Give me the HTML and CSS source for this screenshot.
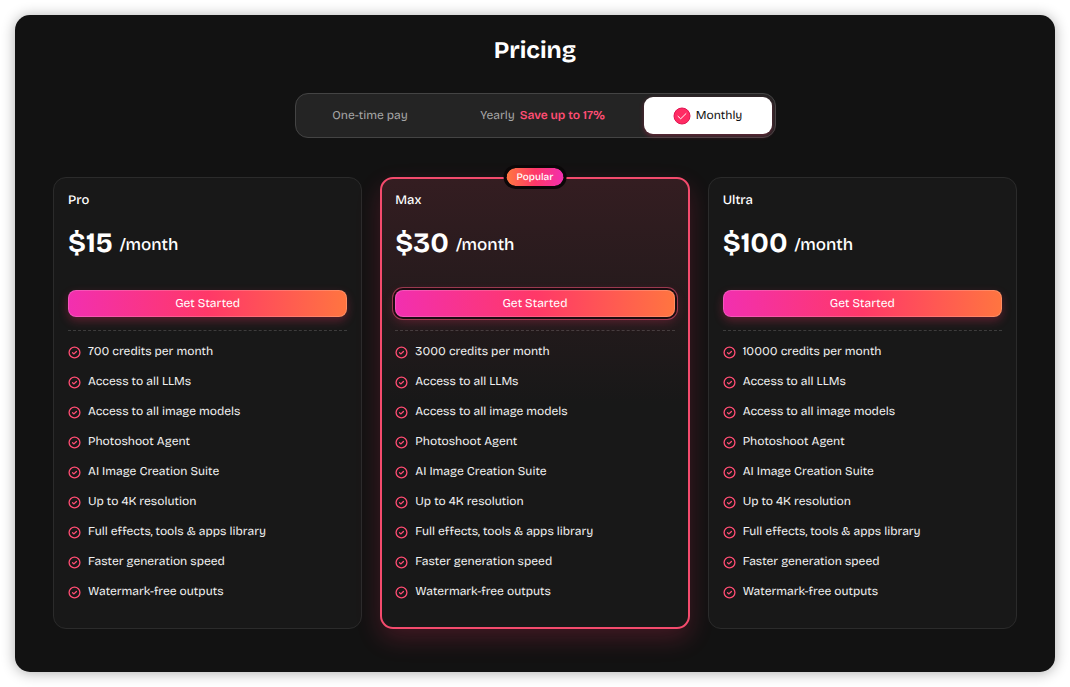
FILE: index.html
```html
<!DOCTYPE html>
<html lang="en">
<head>
    <meta charset="UTF-8">
    <meta name="viewport" content="width=device-width, initial-scale=1.0">
    <title>Pricing</title>
    <link rel="stylesheet" href="styles.css">
</head>
<body>
<svg class="sprite" aria-hidden="true">
    <symbol id="check" viewBox="0 0 12 12">
        <circle cx="6" cy="6" r="5" />
        <path d="M4.2 6.2l1.3 1.1L7.8 5" />
    </symbol>
</svg>

<main class="pricing">
    <h1 class="pricing__title">Pricing</h1>

    <div class="billing" role="group" aria-label="Billing period">
        <button class="billing__option" type="button" aria-pressed="false">One-time pay</button>
        <button class="billing__option" type="button" aria-pressed="false">Yearly <span class="billing__save">Save up to 17%</span></button>
        <button class="billing__option billing__option--active" type="button" aria-pressed="true">
            <svg class="billing__check" viewBox="0 0 18 18" aria-hidden="true">
                <circle cx="9" cy="9" r="8" />
                <path d="M5 9.3l2.7 2.5L13 6.6" />
            </svg>
            Monthly
        </button>
    </div>

    <div class="plans">
        <section class="plan">
            <h2 class="plan__name">Pro</h2>
            <p class="plan__price">$15 <span class="plan__period">/month</span></p>
            <button class="plan__button" type="button">Get Started</button>
            <ul class="plan__features">
                <li><svg><use href="#check" /></svg>700 credits per month</li>
                <li><svg><use href="#check" /></svg>Access to all LLMs</li>
                <li><svg><use href="#check" /></svg>Access to all image models</li>
                <li><svg><use href="#check" /></svg>Photoshoot Agent</li>
                <li><svg><use href="#check" /></svg>AI Image Creation Suite</li>
                <li><svg><use href="#check" /></svg>Up to 4K resolution</li>
                <li><svg><use href="#check" /></svg>Full effects, tools &amp; apps library</li>
                <li><svg><use href="#check" /></svg>Faster generation speed</li>
                <li><svg><use href="#check" /></svg>Watermark-free outputs</li>
            </ul>
        </section>

        <section class="plan plan--popular">
            <span class="plan__badge">Popular</span>
            <h2 class="plan__name">Max</h2>
            <p class="plan__price">$30 <span class="plan__period">/month</span></p>
            <button class="plan__button" type="button">Get Started</button>
            <ul class="plan__features">
                <li><svg><use href="#check" /></svg>3000 credits per month</li>
                <li><svg><use href="#check" /></svg>Access to all LLMs</li>
                <li><svg><use href="#check" /></svg>Access to all image models</li>
                <li><svg><use href="#check" /></svg>Photoshoot Agent</li>
                <li><svg><use href="#check" /></svg>AI Image Creation Suite</li>
                <li><svg><use href="#check" /></svg>Up to 4K resolution</li>
                <li><svg><use href="#check" /></svg>Full effects, tools &amp; apps library</li>
                <li><svg><use href="#check" /></svg>Faster generation speed</li>
                <li><svg><use href="#check" /></svg>Watermark-free outputs</li>
            </ul>
        </section>

        <section class="plan">
            <h2 class="plan__name">Ultra</h2>
            <p class="plan__price">$100 <span class="plan__period">/month</span></p>
            <button class="plan__button" type="button">Get Started</button>
            <ul class="plan__features">
                <li><svg><use href="#check" /></svg>10000 credits per month</li>
                <li><svg><use href="#check" /></svg>Access to all LLMs</li>
                <li><svg><use href="#check" /></svg>Access to all image models</li>
                <li><svg><use href="#check" /></svg>Photoshoot Agent</li>
                <li><svg><use href="#check" /></svg>AI Image Creation Suite</li>
                <li><svg><use href="#check" /></svg>Up to 4K resolution</li>
                <li><svg><use href="#check" /></svg>Full effects, tools &amp; apps library</li>
                <li><svg><use href="#check" /></svg>Faster generation speed</li>
                <li><svg><use href="#check" /></svg>Watermark-free outputs</li>
            </ul>
        </section>
    </div>
</main>
</body>
</html>
```
FILE: styles.css
```css
* {
  box-sizing: border-box;
}

body {
  margin: 0;
  padding: 15px;
  background: #ffffff;
  color: #ffffff;
  font-family: "Bricolage Grotesque", Inter, sans-serif;
  font-size: 12px;
  line-height: 16px;
  text-rendering: geometricPrecision;
}

button {
  font: inherit;
  text-rendering: inherit;
  cursor: pointer;
}

.sprite {
  display: none;
}

.pricing {
  padding: 20px 38px 43px;
  border-radius: 15px;
  background: #121212;
  box-shadow: 0 1px 14px rgba(0, 0, 0, 0.32);
}

.pricing__title {
  margin: 0;
  font-size: 24px;
  line-height: 32px;
  font-weight: 700;
  text-align: center;
}

/* Billing switch */
.billing {
  display: grid;
  grid-template-columns: 143fr 202fr 128fr;
  max-width: 481px;
  margin: 26px auto 39px;
  padding: 3px;
  border: 1px solid #444444;
  border-radius: 13px;
  background: #242424;
}

.billing__option {
  display: flex;
  align-items: center;
  justify-content: center;
  gap: 5px;
  height: 37px;
  padding: 0;
  border: 0;
  border-radius: 9px;
  background: transparent;
  color: #a6a6a6;
  white-space: nowrap;
}

.billing__save {
  color: #ff4d73;
  font-weight: 600;
}

.billing__option--active {
  background: #ffffff;
  color: #111111;
  box-shadow: 0 2px 5px rgba(255, 51, 102, 0.3);
}

.billing__check {
  width: 18px;
  height: 18px;
  fill: #ff2b63;
  stroke: #e01553;
}

.billing__check path {
  fill: none;
  stroke: #ffffff;
  stroke-linecap: round;
  stroke-linejoin: round;
}

/* Plan cards */
.plans {
  display: grid;
  grid-template-columns: repeat(3, 1fr);
  gap: 18px;
}

.plan {
  position: relative;
  padding: 12px 14px 21px;
  border: 1px solid #2b2b2b;
  border-radius: 13px;
  background: #181818;
}

.plan--popular {
  padding: 11px 13px 20px;
  border: 2px solid #f44b6d;
  background: linear-gradient(#341d21, #181818 50%);
  box-shadow: 0 10px 24px rgba(255, 51, 102, 0.2);
}

.plan__badge {
  position: absolute;
  top: -14px;
  left: 50%;
  transform: translateX(-50%);
  padding: 0 10px;
  border: 3px solid #0b0708;
  border-radius: 12px;
  background: linear-gradient(90deg, #ff7840, #ff3868 50%, #f22fb0) padding-box;
  font-size: 10px;
  line-height: 18px;
  font-weight: 500;
}

.plan__name {
  margin: 0;
  font-size: 13px;
  line-height: 20px;
  font-weight: 500;
}

.plan__price {
  display: flex;
  align-items: flex-end;
  gap: 7px;
  margin: 15px 0 29px;
  font-size: 28px;
  line-height: 36px;
  font-weight: 700;
}

.plan__period {
  font-size: 17px;
  line-height: 32px;
  font-weight: 500;
}

.plan__button {
  display: block;
  width: 100%;
  height: 27px;
  padding: 0;
  border: 1px solid rgba(255, 255, 255, 0.18);
  border-radius: 8px;
  background: linear-gradient(90deg, #f22fb0, #ff3868 50%, #ff7540) border-box;
  color: #ffffff;
  box-shadow: 0 4px 10px rgba(255, 51, 102, 0.28);
}

.plan--popular .plan__button {
  box-shadow: 0 0 0 2px #1a0c10, 0 0 0 3px #9b3950, 0 4px 12px rgba(255, 51, 102, 0.3);
}

.plan__features {
  margin: 13px 0 0;
  padding: 6px 0 0;
  border-top: 1px dashed rgba(255, 255, 255, 0.16);
  list-style: none;
}

.plan__features li {
  display: flex;
  align-items: center;
  gap: 7px;
  height: 30px;
  color: #f0f0f0;
}

.plan__features svg {
  flex: none;
  width: 13px;
  height: 13px;
  fill: none;
  stroke: #ff4d73;
  stroke-width: 1.2;
  stroke-linecap: round;
  stroke-linejoin: round;
}
```
